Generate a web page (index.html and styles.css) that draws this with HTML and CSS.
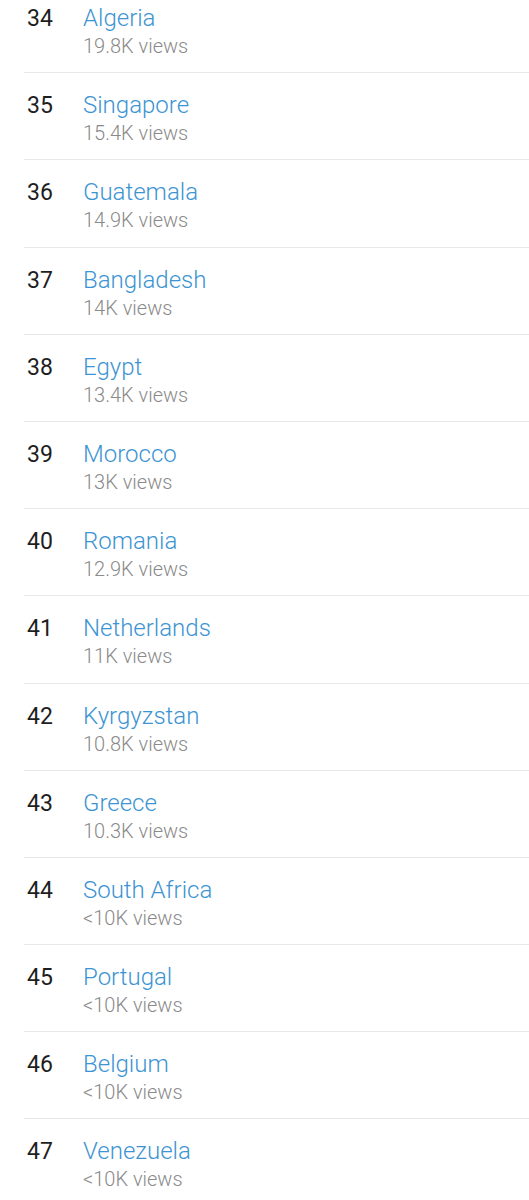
FILE: index.html
```html
<!DOCTYPE html>
<html lang="en">
<head>
    <meta charset="UTF-8">
    <meta name="viewport" content="width=device-width, initial-scale=1.0">
    <title>Top countries</title>
    <link rel="stylesheet" href="styles.css">
</head>
<body>
    <ul class="ranking">
        <li class="row"><span class="rank">34</span><div class="info"><a class="country" href="#">Algeria</a><span class="views">19.8K views</span></div></li>
        <li class="row"><span class="rank">35</span><div class="info"><a class="country" href="#">Singapore</a><span class="views">15.4K views</span></div></li>
        <li class="row"><span class="rank">36</span><div class="info"><a class="country" href="#">Guatemala</a><span class="views">14.9K views</span></div></li>
        <li class="row"><span class="rank">37</span><div class="info"><a class="country" href="#">Bangladesh</a><span class="views">14K views</span></div></li>
        <li class="row"><span class="rank">38</span><div class="info"><a class="country" href="#">Egypt</a><span class="views">13.4K views</span></div></li>
        <li class="row"><span class="rank">39</span><div class="info"><a class="country" href="#">Morocco</a><span class="views">13K views</span></div></li>
        <li class="row"><span class="rank">40</span><div class="info"><a class="country" href="#">Romania</a><span class="views">12.9K views</span></div></li>
        <li class="row"><span class="rank">41</span><div class="info"><a class="country" href="#">Netherlands</a><span class="views">11K views</span></div></li>
        <li class="row"><span class="rank">42</span><div class="info"><a class="country" href="#">Kyrgyzstan</a><span class="views">10.8K views</span></div></li>
        <li class="row"><span class="rank">43</span><div class="info"><a class="country" href="#">Greece</a><span class="views">10.3K views</span></div></li>
        <li class="row"><span class="rank">44</span><div class="info"><a class="country" href="#">South Africa</a><span class="views">&lt;10K views</span></div></li>
        <li class="row"><span class="rank">45</span><div class="info"><a class="country" href="#">Portugal</a><span class="views">&lt;10K views</span></div></li>
        <li class="row"><span class="rank">46</span><div class="info"><a class="country" href="#">Belgium</a><span class="views">&lt;10K views</span></div></li>
        <li class="row"><span class="rank">47</span><div class="info"><a class="country" href="#">Venezuela</a><span class="views">&lt;10K views</span></div></li>
    </ul>
</body>
</html>
```

FILE: styles.css
```css
body {
    margin: 0;
    background-color: #fff;
    font-family: Roboto, "Liberation Sans", sans-serif;
    overflow: hidden;
}

.ranking {
    list-style: none;
    margin: -14px 0 0 24px;
    padding: 0;
}

.row {
    display: flex;
    padding: 18px 0 12.2px 0;
    border-bottom: 1px solid #e8e8e8;
}

.rank {
    width: 56px;
    flex-shrink: 0;
    padding: 1px 0 0 3px;
    font-size: 23px;
    line-height: 28px;
    color: #1e1e1e;
}

.info {
    display: flex;
    flex-direction: column;
}

.country {
    font-size: 24px;
    font-weight: 300;
    line-height: 28px;
    color: #3d94d2;
    text-decoration: none;
}

.views {
    font-size: 20px;
    font-weight: 300;
    line-height: 28px;
    color: #8a8a8a;
}
```
